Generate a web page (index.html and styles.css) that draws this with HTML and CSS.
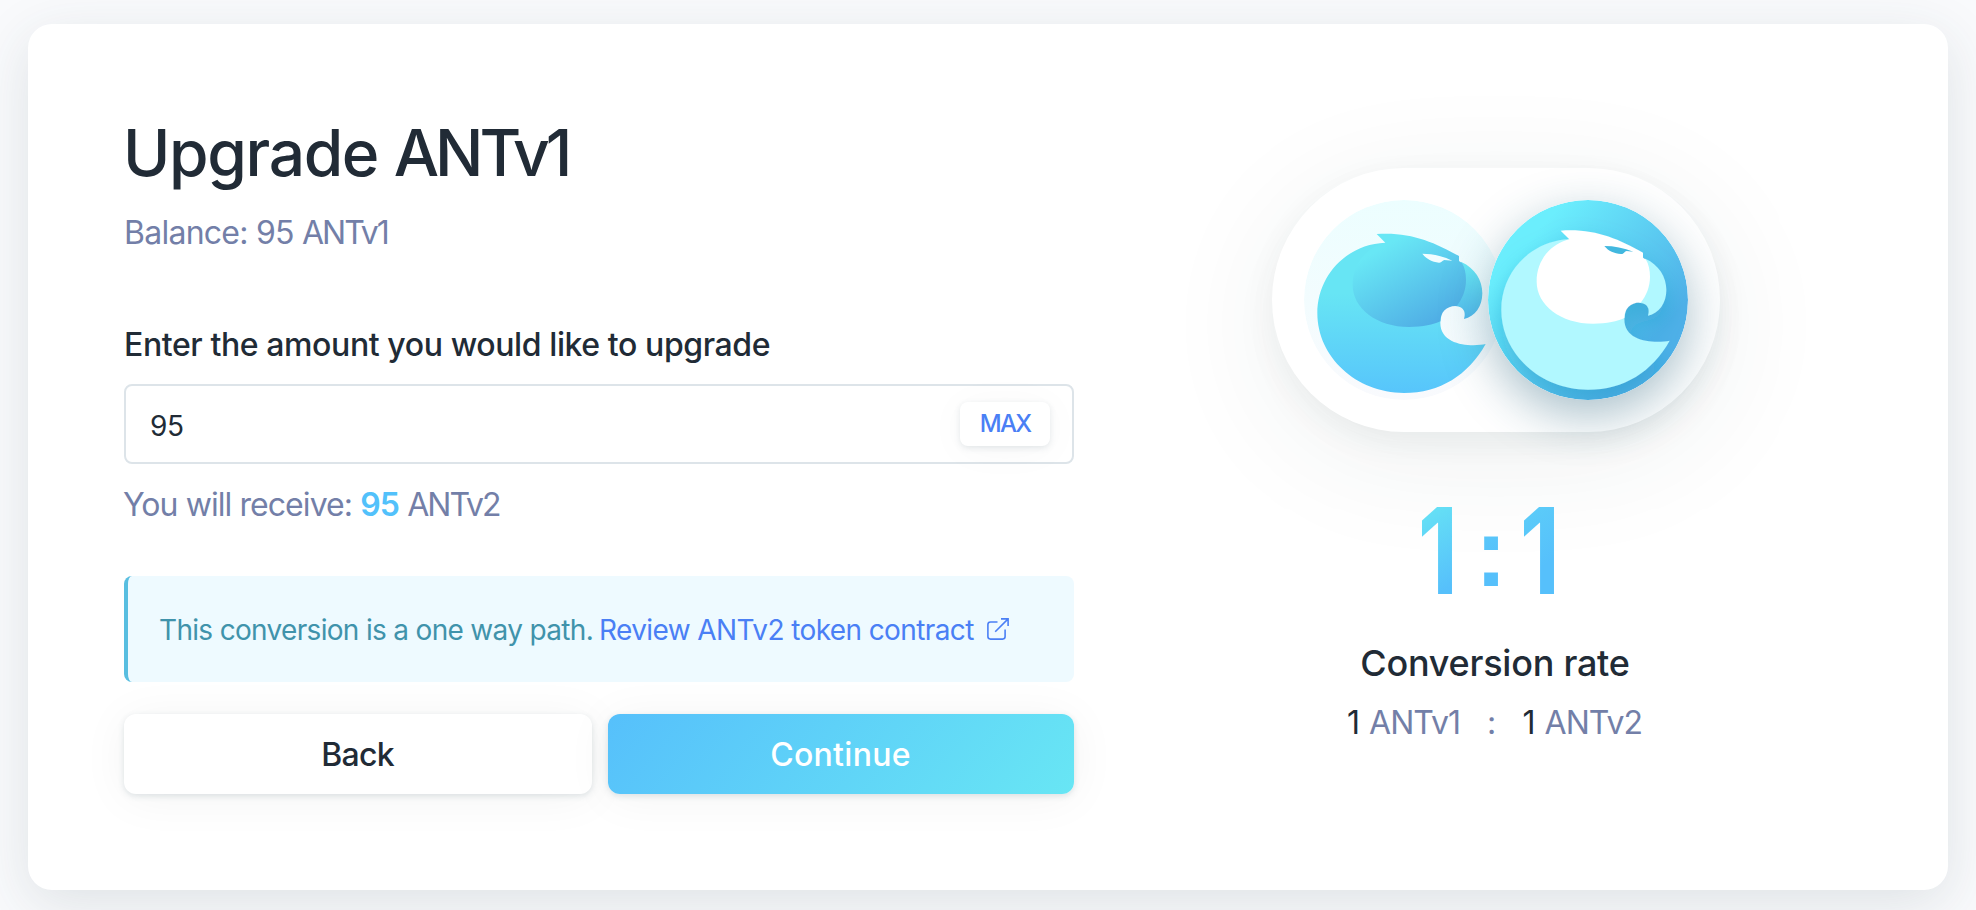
FILE: index.html
```html
<!DOCTYPE html>
<html lang="en">
<head>
<meta charset="utf-8">
<title>Upgrade ANTv1</title>
<link rel="stylesheet" href="styles.css">
</head>
<body>
<main class="card">
  <section class="form">
    <h1 class="title">Upgrade <span class="title-token">ANTv1</span></h1>
    <p class="balance">Balance: 95 <span class="token">ANTv1</span></p>
    <label class="label" for="amount">Enter the amount you would like to upgrade</label>
    <div class="field">
      <input class="field-input" id="amount" type="text" value="95">
      <button class="max" type="button">MAX</button>
    </div>
    <p class="receive">You will receive: <strong class="receive-amount">95</strong> <span class="token">ANTv2</span></p>
    <div class="info">
      <span class="info-text">This conversion is a one way path.</span>
      <a class="info-link" href="#">Review ANTv2 token contract</a>
      <svg class="info-icon" viewBox="0 0 22 22" fill="none" stroke="currentColor" stroke-width="1.6">
        <path d="M10.5 4H3.5Q.9 4 .9 6.6V18.6Q.9 21.1 3.5 21.1H15.6Q18.1 21.1 18.1 18.6V11.5M14 .9H21.1V8M21.1 .9L8.2 13.8"/>
      </svg>
    </div>
    <div class="actions">
      <button class="btn btn-back" type="button">Back</button>
      <button class="btn btn-continue" type="button">Continue</button>
    </div>
  </section>
  <section class="rate">
    <div class="coins">
      <svg class="coin coin-v1" viewBox="132 120 600 600">
        <defs>
          <linearGradient id="v1-bg" x1="0" y1="0" x2="0" y2="1"><stop offset="0" stop-color="#ecfeff"/><stop offset="1" stop-color="#f9fafd"/></linearGradient>
          <linearGradient id="v1-body" gradientUnits="userSpaceOnUse" x1="0" y1="400" x2="0" y2="700"><stop offset="0" stop-color="#67e5f4"/><stop offset="1" stop-color="#57c5fb"/></linearGradient>
          <linearGradient id="v1-head" gradientUnits="userSpaceOnUse" x1="390" y1="250" x2="530" y2="490"><stop offset="0" stop-color="#68e7f5"/><stop offset="1" stop-color="#4fade5"/></linearGradient>
          <linearGradient id="v1-beak" gradientUnits="userSpaceOnUse" x1="620" y1="320" x2="640" y2="480"><stop offset="0" stop-color="#68e7f5"/><stop offset="1" stop-color="#52b8ec"/></linearGradient>
        </defs>
        <circle cx="432" cy="420" r="300" fill="url(#v1-bg)"/>
        <path fill="url(#v1-body)" d="M376 248C262 252 172 345 172 460C172 590 288 699 432 699C540 699 625 645 677 552C640 560 540 560 541 487L560 360Z"/>
        <path fill="url(#v1-beak)" d="M604 306C645 325 667 360 667 400C667 440 645 470 612 477C617 462 616 440 585 438L560 400Z"/>
        <path fill="url(#v1-head)" d="M350 222C450 215 520 245 597 288V303L606 309C614 322 618 340 618 360C618 390 607 417 590 438C562 436 541 456 541 484C520 494 490 501 447 501C350 501 278 445 278 375C278 310 320 262 376 248Z"/>
        <path fill="#f1fdff" d="M487 281C515 281 545 287 577 302L553 300C548 300 545 309 537 308C515 305 500 298 487 281Z"/>
      </svg>
      <svg class="coin coin-v2" viewBox="132 120 600 600">
        <defs>
          <linearGradient id="v2-bg" gradientUnits="userSpaceOnUse" x1="250" y1="250" x2="610" y2="560"><stop offset="0" stop-color="#6beefd"/><stop offset="1" stop-color="#4fb0e8"/></linearGradient>
          <clipPath id="v2-clip"><circle cx="432" cy="420" r="300"/></clipPath>
          <filter id="v2-shade" x="-40%" y="-40%" width="180%" height="180%"><feDropShadow dx="0" dy="42" stdDeviation="38" flood-color="#1496c0" flood-opacity=".42"/></filter>
        </defs>
        <circle cx="432" cy="420" r="300" fill="url(#v2-bg)"/>
        <g clip-path="url(#v2-clip)">
          <g transform="translate(0 -10)" filter="url(#v2-shade)">
            <path fill="#b1f8ff" d="M376 248C262 252 172 345 172 460C172 590 288 699 432 699C540 699 625 645 677 552C640 560 540 560 541 487L560 360Z"/>
            <path fill="#b1f8ff" d="M604 306C645 325 667 360 667 400C667 440 645 470 612 477C617 462 616 440 585 438L560 400Z"/>
            <path fill="#fff" d="M350 222C450 215 520 245 597 288V303L606 309C614 322 618 340 618 360C618 390 607 417 590 438C562 436 541 456 541 484C520 494 490 501 447 501C350 501 278 445 278 375C278 310 320 262 376 248Z"/>
          </g>
          <path fill="#42b8df" d="M481 258C510 258 540 264 568 275L548 273C541 273 541 283 531 282C510 280 494 274 481 258Z"/>
        </g>
      </svg>
    </div>
    <div class="ratio">
      <span class="ratio-one ratio-first">1</span><span class="ratio-colon">:</span><span class="ratio-one">1</span>
    </div>
    <h2 class="rate-title">Conversion rate</h2>
    <div class="rate-row">
      <span><b class="num">1</b> ANTv1</span>
      <span>:</span>
      <span><b class="num">1</b> ANTv2</span>
    </div>
  </section>
</main>
</body>
</html>
```
FILE: styles.css
```css
* { box-sizing: border-box; }
body {
  margin: 0;
  height: 910px;
  padding: 24px 28px 20px;
  overflow: hidden;
  background: #f9fafc;
  font-family: Inter, "Liberation Sans", sans-serif;
  color: #212b36;
}
h1, h2, p { margin: 0; font-weight: 400; }
button, input { font-family: inherit; color: inherit; }
.card {
  display: flex;
  justify-content: space-between;
  height: 866px;
  padding: 97px 228px 96px 96px;
  border-radius: 24px;
  background: #fff;
  box-shadow: 0 14px 56px rgba(45, 66, 74, .13);
}
.form { width: 950px; }
.title { margin-left: -1px; font-size: 64px; line-height: 64px; font-weight: 500; letter-spacing: -1.35px; white-space: nowrap; }
.title-token { letter-spacing: -4.1px; }
.token { letter-spacing: -2px; }
.balance { margin-top: 28px; font-size: 32px; line-height: 40px; letter-spacing: -.75px; color: #737fa8; }
.label { display: block; margin-top: 72px; font-size: 32px; line-height: 40px; font-weight: 500; letter-spacing: -.4px; white-space: nowrap; }
.field {
  display: flex;
  align-items: center;
  justify-content: space-between;
  height: 80px;
  margin-top: 19px;
  padding: 0 22px 0 24px;
  border: 2px solid #dde4e9;
  border-radius: 8px;
}
.field-input { width: 600px; padding: 4px 0 0; border: 0; outline: 0; background: none; font-size: 28px; letter-spacing: -.3px; }
.max {
  width: 90px;
  height: 44px;
  padding: 0 0 2px;
  border: 0;
  border-radius: 8px;
  background: #fff;
  color: #4a7ff5;
  font-size: 24px;
  font-weight: 500;
  letter-spacing: -1.8px;
  box-shadow: 0 2px 6px rgba(70, 100, 110, .14), 0 4px 40px rgba(0, 0, 0, .035);
}
.receive { margin-top: 21px; margin-left: -1px; font-size: 32px; line-height: 40px; letter-spacing: -.93px; color: #737fa8; }
.receive-amount { font-weight: 600; color: #52c1fb; letter-spacing: -.8px; }
.info {
  display: flex;
  align-items: center;
  height: 106px;
  margin-top: 51px;
  padding: 2px 0 0 31px;
  border-left: 4px solid #58bee0;
  border-radius: 8px;
  background: #eefaff;
  font-size: 28px;
  line-height: 36px;
  letter-spacing: -.68px;
  white-space: nowrap;
}
.info-text { color: #4093ab; }
.info-link { margin-left: 6px; color: #4a7ff5; text-decoration: none; letter-spacing: -.6px; }
.info-icon { width: 22px; height: 22px; margin-left: 13px; margin-bottom: 2px; color: #4a7ff5; }
.actions { display: flex; gap: 16px; margin-top: 32px; }
.btn {
  width: 466px;
  height: 80px;
  padding: 0;
  border: 0;
  border-radius: 12px;
  background: #fff;
  font-size: 32px;
  font-weight: 500;
  letter-spacing: .3px;
  box-shadow: 0 2px 6px rgba(70, 100, 110, .16), 0 4px 48px rgba(0, 0, 0, .05);
}
.btn-back { width: 468px; padding-right: 1px; letter-spacing: -.7px; }
.btn-continue { padding-right: 1px; background: linear-gradient(130deg, #56c0fb, #68e6f4); color: #fff; }
.rate { display: flex; flex-direction: column; align-items: center; width: 448px; padding-top: 47px; }
.coins {
  display: flex;
  width: 448px;
  height: 264px;
  padding: 32px;
  border-radius: 132px;
  background: #fff;
  box-shadow: 0 24px 120px rgba(40, 60, 70, .08), 0 10px 32px rgba(40, 60, 70, .06);
}
.coin { flex: none; width: 200px; height: 200px; border-radius: 50%; }
.coin-v2 { margin-left: -16px; box-shadow: 0 16px 48px rgba(30, 90, 115, .38); }
.ratio {
  display: flex;
  height: 144px;
  margin-top: 47px;
  padding-right: 14px;
  font-size: 120px;
  line-height: 144px;
  font-weight: 700;
  text-align: center;
}
.ratio-one, .ratio-colon {
  background: linear-gradient(150deg, #5bcbf9 25%, #56c0fb 60%);
  -webkit-background-clip: text;
  background-clip: text;
  color: transparent;
}
.ratio-one { width: 60px; transform: scaleX(.78); }
.ratio-first { background-image: linear-gradient(155deg, #66e2f5 20%, #56c0fb 75%); }
.ratio-colon {
  width: 42px;
  padding-left: 4px;
  font-family: "Liberation Sans", Arial, sans-serif;
  font-size: 98px;
  line-height: 147px;
}
.rate-title { margin-top: 16px; padding-right: 2px; font-size: 36px; line-height: 48px; font-weight: 500; letter-spacing: -.25px; }
.rate-row { display: flex; gap: 27px; margin-top: 16px; padding-right: 3px; font-size: 32px; line-height: 40px; letter-spacing: -.95px; word-spacing: 2px; color: #737fa8; white-space: nowrap; }
.num { font-weight: 400; color: #212b36; }
```
